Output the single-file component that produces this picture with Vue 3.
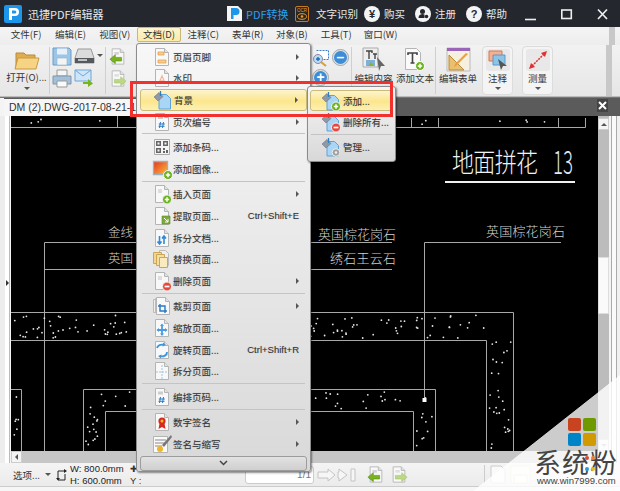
<template>
  <div class="app">
    <svg class="defs" width="0" height="0">
      <defs>
        <linearGradient id="g-red" x1="0" y1="0" x2="1" y2="1"><stop offset="0" stop-color="#e8341c" /><stop offset="1" stop-color="#f8c040" /></linearGradient>
        <g id="pg"><path d="M3.5 1.5h9l4 4v13h-13z" fill="#f8f8f8" stroke="#b4b4b4" /><path d="M12.5 1.5v4h4" fill="#e2e2e2" stroke="#b4b4b4" /></g>
        <g id="plus"><circle cx="15" cy="15.5" r="4.5" fill="#6cb31c" stroke="#f4f4f4" /><path d="M12.8 15.5h4.4M15 13.3v4.4" stroke="#fff" stroke-width="1.5" /></g>
        <g id="minus"><circle cx="15" cy="15.5" r="4.5" fill="#e5483c" stroke="#f4f4f4" /><path d="M12.6 15.5h4.8" stroke="#fff" stroke-width="1.7" /></g>
        <g id="gear"><circle cx="15" cy="15.5" r="3.8" fill="#a0a0a0" stroke="#eee" /><circle cx="15" cy="15.5" r="1.3" fill="#eee" /></g>
        <g id="bgbase"><path d="M6 4.5h7.5l4 4v10.500H6z" fill="#a9d6f6" stroke="#5fa3d6" /><path d="M1 7l5-4.500 4 4-5 4.500z" fill="#8d98a8" stroke="#667" stroke-width=".5" /><path d="M7.500 1v5" stroke="#2d7fc0" stroke-width="1.300" /></g>
        <g id="hash"><path d="M8.500 10l-1 6M11.500 10l-1 6M6.800 12h6M6.500 14.300h6" stroke="#2a7cc4" stroke-width="1" /></g>

        <symbol id="i-hf" viewBox="0 0 20 20"><use href="#pg" /><path d="M6 5h6v3H6zM6 13h8v3H6z" fill="#f4ce92" stroke="#e49a3c" stroke-width=".7" /></symbol>
        <symbol id="i-wm" viewBox="0 0 20 20"><use href="#pg" /><path d="M7 15l3-7 3 7M8 13h4" fill="none" stroke="#f2b8a0" stroke-width="1.300" /></symbol>
        <symbol id="i-bg" viewBox="0 0 20 20"><use href="#bgbase" /></symbol>
        <symbol id="i-bgadd" viewBox="0 0 20 20"><use href="#bgbase" /><use href="#plus" /></symbol>
        <symbol id="i-bgdel" viewBox="0 0 20 20"><use href="#bgbase" /><use href="#minus" /></symbol>
        <symbol id="i-bgman" viewBox="0 0 20 20"><use href="#bgbase" /><use href="#gear" /></symbol>
        <symbol id="i-num" viewBox="0 0 20 20"><use href="#pg" /><path d="M6 5h5v2H6z" fill="#ccc" /><use href="#hash" /></symbol>
        <symbol id="i-qr" viewBox="0 0 20 20"><path d="M2.500 2.500h15v15h-15z" fill="#f4f4f4" stroke="#aaa" /><path d="M4 4h5v5H4zM11 4h5v5h-5zM4 11h5v5H4zM11 11h2v2h-2zM14 13h2v3h-2zM11 14h2v2h-2z" fill="#666" /><path d="M5.500 5.500h2v2h-2zM12.500 5.500h2v2h-2zM5.500 12.500h2v2h-2z" fill="#f4f4f4" /></symbol>
        <symbol id="i-img" viewBox="0 0 20 20"><path d="M1.500 2.500h14v13h-14z" fill="url(#g-red)" stroke="#9cb0c4" stroke-width="1.300" /><use href="#plus" transform="translate(1 .5)" /></symbol>
        <symbol id="i-ins" viewBox="0 0 20 20"><use href="#pg" /><path d="M6 5h4v4H6z" fill="#ddd" /><use href="#plus" /></symbol>
        <symbol id="i-ext" viewBox="0 0 20 20"><use href="#pg" /><path d="M10 10h8v8h-8z" fill="#7cab3c" stroke="#5d8a25" stroke-width=".6" /><path d="M12 12l4 4M16 13v3h-3" fill="none" stroke="#fff" /></symbol>
        <symbol id="i-spl" viewBox="0 0 20 20"><use href="#pg" /><path d="M7.500 8v8M5.500 13.500l2 2.500 2-2.500M12 16V8M10 10.500l2-2.500 2 2.500" fill="none" stroke="#2e8ad8" stroke-width="1.600" /></symbol>
        <symbol id="i-rep" viewBox="0 0 20 20"><path d="M7.500 1.500h6l3 3v12h-9z" fill="#eee" stroke="#bbb" /><path d="M1.500 3.500h8v11h-8z" fill="#f3d68c" stroke="#c9a658" /><path d="M4.500 5.500h8v11h-8z" fill="#f6dea0" stroke="#c9a658" /><path d="M7.500 8.500h8v10h-8z" fill="#faeac0" stroke="#c9a658" /></symbol>
        <symbol id="i-del" viewBox="0 0 20 20"><use href="#pg" /><path d="M6 5h4v4H6z" fill="#ddd" /><use href="#minus" /></symbol>
        <symbol id="i-crop" viewBox="0 0 20 20"><path d="M1.500 3.500h8v13h-8z" fill="#eee" stroke="#bbb" /><path d="M3.500 2.500h8v14h-8z" fill="#f4f4f4" stroke="#bbb" /><use href="#pg" transform="translate(1 0)" /><path d="M8 8v7h7M6 10h7v7" fill="none" stroke="#2878c4" stroke-width="1.400" /></symbol>
        <symbol id="i-siz" viewBox="0 0 20 20"><use href="#pg" /><path d="M10 7v10M5.500 12h9" stroke="#4a9ce0" stroke-width="1.800" /><path d="M10 5.500l-2 2.500h4zM10 18l-2-2.500h4zM4.500 12l2.500-2v4zM15.500 12l-2.500-2v4z" fill="#4a9ce0" /></symbol>
        <symbol id="i-rot" viewBox="0 0 20 20"><use href="#pg" /><path d="M5 8a5 4 0 0 1 7-3M15 12a5 4 0 0 1-7 4" fill="none" stroke="#3c96dc" stroke-width="1.800" /><path d="M11 2.500l3 2.500-3.500 1.500zM9 18.500l-3-2.500 3.500-1.500z" fill="#3c96dc" /></symbol>
        <symbol id="i-pgs" viewBox="0 0 20 20"><use href="#pg" /><path d="M10 4v14M4 11h12" stroke="#9cc4e4" stroke-dasharray="2 1" /></symbol>
        <symbol id="i-arr" viewBox="0 0 20 20"><use href="#pg" /><path d="M6 4.500h5v3H6z" fill="#ccc" /><use href="#hash" /></symbol>
        <symbol id="i-sig" viewBox="0 0 20 20"><use href="#pg" /><circle cx="10" cy="9" r="3.600" fill="#d62a20" /><circle cx="10" cy="9" r="1.500" fill="#f4c020" /><path d="M7.500 11.500l-1 5.500 3.500-2 3.500 2-1-5.500z" fill="#d62a20" /></symbol>
        <symbol id="i-ini" viewBox="0 0 20 20"><path d="M1.500 2.500h14v16h-14z" fill="#fafafa" stroke="#b4b4b4" /><path d="M3 6h11M3 9h11M3 12h7" stroke="#888" /><path d="M19 1l-9 10 2 2L20 3z" fill="#777" /><circle cx="8" cy="15" r="3" fill="#f0b428" /></symbol>

        <symbol id="i-docl" viewBox="0 0 20 20"><use href="#pg" /><path d="M6 5h5v3H6z" fill="#d4d4d4" /><path d="M1 13l6-5v3h7v4H7v3z" fill="#78b41e" stroke="#4f8410" stroke-width=".6" /></symbol>
        <symbol id="i-docr" viewBox="0 0 20 20"><use href="#pg" /><path d="M6 5h5v3H6z" fill="#e0e0e0" /><path d="M19 13l-6-5v3H6v4h7v3z" fill="#bcd884" stroke="#a3c06c" stroke-width=".6" /></symbol>
      </defs>
    </svg>

    <header class="titlebar">
      <svg class="logo" viewBox="0 0 18 18"><rect width="18" height="18" rx="2" fill="#1c96ea" /><path d="M5 15V3h6a4 4 0 0 1 0 8H8v4z" fill="#fff" /><path d="M8 5.500h2.800a1.500 1.500 0 0 1 0 3H8z" fill="#1c96ea" /></svg>
      <span class="app-name">迅捷PDF编辑器</span>
      <svg class="pdf-ico" viewBox="0 0 17 17"><path d="M1 1h11l4 4v11H1z" fill="#f4f4f4" /><path d="M5 14V3h5a3.500 3.500 0 0 1 0 7H7.500v4z" fill="#1c96ea" /></svg>
      <span class="pdf-conv">PDF转换</span>
      <svg class="ocr-ico" viewBox="0 0 14 16">
        <rect x=".5" y=".5" width="13" height="15" rx="1.500" fill="#2a2622" stroke="#c87a1e" />
        <text x="7" y="6" text-anchor="middle" font-size="4.500" fill="#e89a2c" font-family="Liberation Sans, sans-serif">OCR</text>
        <ellipse cx="7" cy="10.500" rx="4.500" ry="2.800" fill="none" stroke="#e89a2c" />
        <circle cx="7" cy="10.500" r="1.300" fill="#e89a2c" />
      </svg>
      <span class="tb-link first">文字识别</span>
      <span class="round-ico">¥</span>
      <span class="tb-link">购买</span>
      <span class="round-ico">
        <svg viewBox="0 0 15 15" width="15" height="15"><circle cx="6.500" cy="5.500" r="2.500" fill="#24282e" /><path d="M2.500 12c0-3 2-4 4-4 1 0 1.500.2 2 .6v3.400z" fill="#24282e" /><circle cx="10.500" cy="10.500" r="1.800" fill="#24282e" /></svg>
      </span>
      <span class="tb-link">注册</span>
      <span class="round-ico">?</span>
      <span class="tb-link">帮助</span>
      <svg class="win-ctrls" viewBox="0 0 84 14" width="84" height="14">
        <path d="M0 12.500h11" stroke="#eee" stroke-width="1.600" />
        <rect x="36.800" y="3" width="9.500" height="8.500" fill="none" stroke="#eee" stroke-width="1.600" />
        <path d="M73 2.500l9 9.500M82 2.500l-9 9.500" stroke="#eee" stroke-width="1.700" />
      </svg>
    </header>

    <nav class="menubar">
      <span v-for="m in menus" :key="m" class="menu-item" :class="{ open: m === '文档(D)' }">{{ m }}</span>
      <i class="menu-grip"></i>
    </nav>

    <div class="toolbar">
      <div class="tool open-tool">
        <svg width="26" height="21" viewBox="0 0 26 21">
          <path d="M2 3h8l2 2h9v13H2z" fill="#e0ac50" stroke="#b98a38" />
          <path d="M1 19l3-11h21l-3 11z" fill="#f6d484" stroke="#c89a44" />
        </svg>
        <span class="lbl">打开(O)...</span>
        <i class="caret"></i>
      </div>
      <i class="tsep"></i>
      <div class="file-tools">
        <svg width="20" height="19" viewBox="0 0 20 19"><path d="M1 1h16l2 2v15H1z" fill="#9cc6e8" stroke="#6d9cc6" /><path d="M5 1.500h10v6H5z" fill="#e8f0f8" /><path d="M5 11h10v7H5z" fill="#f4f4f4" stroke="#8fb2d0" stroke-width=".6" /></svg>
        <div class="scan">
          <svg width="21" height="18" viewBox="0 0 21 18"><path d="M4 2h13l3 9v5H1v-5z" fill="#dcdcdc" stroke="#999" /><path d="M1 11h19v5H1z" fill="#55585c" /><path d="M4 13h9" stroke="#eee" stroke-width="1.400" /></svg>
          <i class="caret small"></i>
        </div>
        <svg width="20" height="19" viewBox="0 0 20 19"><path d="M5 1h10v6H5z" fill="#f6f6f6" stroke="#999" /><path d="M1 7h18v8H1z" fill="#a4c0d8" stroke="#7d97ad" /><path d="M5 12h10v6H5z" fill="#fafafa" stroke="#999" /></svg>
        <svg width="20" height="18" viewBox="0 0 20 18"><path d="M1 1h16v11H1z" fill="#cfe6fa" stroke="#6ea6d4" /><path d="M1 1l8 6 8-6" fill="none" stroke="#6ea6d4" /><path d="M9 13h5v-3l5 4.500-5 3.500v-3H9z" fill="#78b41e" /></svg>
      </div>
      <i class="tsep"></i>
      <div class="doc-tools">
        <svg width="18" height="19"><use href="#i-docl" /></svg>
        <svg width="18" height="19"><use href="#i-docr" /></svg>
      </div>
      <div class="under-menu"></div>
      <div class="zoom-tools">
        <div class="zoom-row">
          <svg width="19" height="18" viewBox="0 0 19 18"><path d="M4.500 1.500h12v9h-6" fill="#fff" stroke="#3a80c8" stroke-dasharray="2 1" /><circle cx="6" cy="10" r="4.500" fill="#b8dcf6" stroke="#88a" /><path d="M4 10h4M6 8v4" stroke="#2068b0" stroke-width="1.300" /><path d="M9 13l5 4" stroke="#d8a040" stroke-width="2.200" /></svg>
          <span class="circ">–</span>
        </div>
        <span class="circ second">+</span>
      </div>
      <i class="tsep"></i>
      <div class="tool edit-tool">
        <svg width="24" height="25" viewBox="0 0 24 25"><path d="M1 1h15v19H1z" fill="#eee" stroke="#aaa" /><path d="M4 4h6v2M7 4v8M11 7h4M13 7v5" fill="none" stroke="#444" stroke-width="1.400" /><path d="M4 13h9v6H4z" fill="#7cb0d8" /><path d="M6 19l3-4 3 4z" fill="#8cb040" /><path d="M15 10l8 9-4 0-2 5z" fill="#666" /></svg>
        <span class="lbl">编辑内容</span>
      </div>
      <div class="tool edit-tool w40">
        <svg width="22" height="25" viewBox="0 0 22 25"><path d="M1.500 1.500h11l4 4v17h-15z" fill="#fafafa" stroke="#b4b4b4" /><path d="M4 8V6h9v2M8.500 6v10M6.500 16h4" fill="none" stroke="#444" stroke-width="1.600" /><circle cx="16" cy="19" r="4.500" fill="#6cb31c" stroke="#fff" /><path d="M13.800 19h4.400M16 16.800v4.400" stroke="#fff" stroke-width="1.500" /></svg>
        <span class="lbl">添加文本</span>
      </div>
      <i class="tsep"></i>
      <div class="tool form-tool">
        <svg width="25" height="25" viewBox="0 0 25 25"><path d="M1 1h23v23H1z" fill="#f6f0e0" stroke="#bbb" /><path d="M1 1h23v3H1z" fill="#9a64b8" /><path d="M3 8l0 15 15 0z" fill="#e8c070" stroke="#b88a3c" /><path d="M22 7L10 19l-2 1 1-3L20 6z" fill="#e8a040" /></svg>
        <span class="lbl">编辑表单</span>
      </div>
      <div class="drop-btn">
        <span class="btn-ico">
          <svg width="20" height="20" viewBox="0 0 20 20"><path d="M1 1h13v10H1z" fill="#f4b090" stroke="#d87850" /><path d="M5 5h12v10H5z" fill="#8cc4e8" stroke="#5a98c8" /><path d="M10 9l9 7-4 0-2 4z" fill="#555" /></svg>
        </span>
        <span class="lbl">注释</span>
        <i class="caret"></i>
      </div>
      <div class="drop-btn">
        <span class="btn-ico">
          <svg width="20" height="20" viewBox="0 0 20 20"><path d="M4 16L16 4" stroke="#e03030" stroke-width="1.500" stroke-dasharray="2 1" /><path d="M1 19l2-6 4 4zM19 1l-2 6-4-4z" fill="#e03030" /></svg>
        </span>
        <span class="lbl">测量</span>
        <i class="caret"></i>
      </div>
      <div class="toolbar-grip"></div>
    </div>

    <div class="tabbar">
      <div class="tab">DM (2).DWG-2017-08-21-15</div>
      <span class="tab-close">
        <svg width="9" height="9" viewBox="0 0 9 9"><path d="M1 1l7 7M8 1L1 8" stroke="#fff" stroke-width="2" /></svg>
      </span>
    </div>

    <div class="main">
      <div class="left-strip"><i class="tri-r"></i></div>
      <div class="canvas-col">
        <svg class="drawing" width="587" height="335" viewBox="11 116 587 335">
          <rect x="11" y="116" width="587" height="335" fill="#000" />
          <g fill="none" stroke="#a8a8a8" stroke-width="1">
            <path d="M11 127.500H585.500V118M117.500 116V127M411.500 118V127M438.500 118V127M558.500 118V127" />
            <path d="M44.500 242.500H392M44.500 269.500H392M44.500 242.500V451" />
            <path d="M424.500 242.500H561M424.500 242.500V400" />
            <path d="M11 312.500H513.500V451M11 340.500H486.500V451" />
            <path d="M11 389.500H21.500V451M83.500 451V389.500H435.500V451M105.500 451V411.500H413.500V451" />
          </g>
          <rect x="422.500" y="398" width="4" height="4" fill="#fff" />
          <circle v-for="(d, i) in dots" :key="i" :cx="d[0]" :cy="d[1]" r=".9" fill="#e6e6e6" />
          <g class="cad" fill="#d0d0d0">
            <text x="108" y="237" font-size="12" textLength="25" lengthAdjust="spacingAndGlyphs">金线</text>
            <text x="108" y="263" font-size="12" textLength="25" lengthAdjust="spacingAndGlyphs">英国</text>
            <text x="318" y="239" font-size="13" textLength="78" lengthAdjust="spacing">英国棕花岗石</text>
            <text x="330" y="263" font-size="13" textLength="66" lengthAdjust="spacing">绣石王云石</text>
            <text x="486" y="236" font-size="13" textLength="79" lengthAdjust="spacing">英国棕花岗石</text>
            <text x="452" y="172" font-size="22" fill="#f2f2f2" textLength="86" lengthAdjust="spacing" transform="translate(0 -34.400) scale(1 1.200)">地面拼花</text>
            <text x="553" y="174" font-size="33" fill="#dce8f4" textLength="20" lengthAdjust="spacingAndGlyphs">13</text>
          </g>
          <path d="M445 182H575" stroke="#f0f0f0" stroke-width="2" />
        </svg>
        <div class="hscroll"><span class="sb-btn"><i class="tri-l"></i></span></div>
      </div>
      <div class="vscroll">
        <span class="sb-btn up"><i class="tri-u"></i></span>
        <span class="thumb"></span>
        <span class="sb-btn down"><i class="tri-d"></i></span>
      </div>
      <div class="right-strip"></div>
    </div>

    <footer class="statusbar">
      <span class="opt">选项...</span>
      <i class="caret small"></i>
      <svg class="size-ico" width="11" height="13" viewBox="0 0 11 13"><path d="M2 12V3h7M2 12h7V6" fill="none" stroke="#222" /><path d="M8 1l3 2-3 2zM0 10l2 2.500L4 10z" fill="#222" /></svg>
      <div class="dims"><span>W: 800.0mm</span><span>H: 600.0mm</span></div>
      <div class="coords"><span class="cross">✚</span><span>Y :</span></div>
      <div class="page-input">1/1</div>
      <svg class="nav" width="41" height="16" viewBox="0 0 41 16"><path d="M1 8l7-6v3h10v6H8v3z" transform="matrix(-1 0 0 1 19 0)" fill="#f6f6f6" stroke="#c4c4c4" /><path d="M22 2l8 6-8 6v-3h-1V5h1zM34 2h4v12h-4z" fill="#f6f6f6" stroke="#c4c4c4" /></svg>
      <svg width="18" height="19" class="st-doc"><use href="#i-docl" /></svg>
      <svg width="18" height="19" class="st-doc"><use href="#i-docr" /></svg>
      <div class="st-right">
        <svg width="16" height="19" viewBox="0 0 16 19"><path d="M1 1h10l4 4v13H1z" fill="#fafafa" stroke="#ccc" /></svg>
        <svg width="21" height="19" viewBox="0 0 21 19"><path d="M1 1h19v17H1z" fill="#fdfaf0" stroke="#ecdcb8" /><path d="M4 10h13v8H4z" fill="#fff" stroke="#ecdcb8" /></svg>
      </div>
    </footer>

    <div class="doc-menu">
      <template v-for="(it, i) in docItems" :key="i">
        <div v-if="it.sep" class="sep"></div>
        <div v-else class="row" :class="{ active: it.active }">
          <svg class="mi"><use :href="'#i-' + it.icon" /></svg>
          <span class="row-label">{{ it.label }}</span>
          <span v-if="it.shortcut" class="shortcut">{{ it.shortcut }}</span>
          <i v-if="it.arrow" class="arrow"></i>
        </div>
      </template>
      <div class="more">
        <svg width="9" height="6" viewBox="0 0 9 6"><path d="M1 1l3.500 3.500L8 1" fill="none" stroke="#444" stroke-width="1.500" /></svg>
      </div>
    </div>

    <div class="sub-menu">
      <div class="row active"><svg class="mi"><use href="#i-bgadd" /></svg><span class="row-label">添加...</span></div>
      <div class="row"><svg class="mi"><use href="#i-bgdel" /></svg><span class="row-label">删除所有...</span></div>
      <div class="sep"></div>
      <div class="row"><svg class="mi"><use href="#i-bgman" /></svg><span class="row-label">管理...</span></div>
    </div>

    <div class="red-box"></div>

    <div class="watermark">
      <div class="ms-logo"><i class="a"></i><i class="b"></i><i class="c"></i><i class="d"></i></div>
      <div class="wm-name">系统粉</div>
      <i class="wm-dot red"></i>
      <i class="wm-dot org"></i>
      <i class="wm-dot blu"></i>
      <i class="wm-dot yel"></i>
      <div class="wm-url">www.win7999.com</div>
    </div>
  </div>
</template>

<script setup>
const menus = ['文件(F)', '编辑(E)', '视图(V)', '文档(D)', '注释(C)', '表单(R)', '对象(B)', '工具(T)', '窗口(W)']

const docItems = [
  { icon: 'hf', label: '页眉页脚', arrow: true },
  { icon: 'wm', label: '水印', arrow: true },
  { icon: 'bg', label: '背景', arrow: true, active: true },
  { icon: 'num', label: '页次编号', arrow: true },
  { sep: true },
  { icon: 'qr', label: '添加条码...' },
  { icon: 'img', label: '添加图像...' },
  { sep: true },
  { icon: 'ins', label: '插入页面', arrow: true },
  { icon: 'ext', label: '提取页面...', shortcut: 'Ctrl+Shift+E' },
  { icon: 'spl', label: '拆分文档...' },
  { icon: 'rep', label: '替换页面...' },
  { icon: 'del', label: '删除页面', arrow: true },
  { sep: true },
  { icon: 'crop', label: '裁剪页面', arrow: true },
  { icon: 'siz', label: '缩放页面...' },
  { icon: 'rot', label: '旋转页面...', shortcut: 'Ctrl+Shift+R' },
  { icon: 'pgs', label: '拆分页面...' },
  { sep: true },
  { icon: 'arr', label: '编排页码...' },
  { sep: true },
  { icon: 'sig', label: '数字签名', arrow: true },
  { icon: 'ini', label: '签名与缩写', arrow: true }
]

// speckles of the stone band in the drawing, seeded so every run is the same
let seed = 48271
const rnd = () => {
  seed = (seed * 16807) % 2147483647
  return seed / 2147483647
}
const scatter = (x, y, w, h, n, out) => {
  for (let i = 0; i < n; i++) {
    out.push([+(x + 2 + rnd() * (w - 4)).toFixed(1), +(y + 2 + rnd() * (h - 4)).toFixed(1)])
  }
  return out
}
const dots = []
scatter(11, 313, 475, 27, 150, dots)
scatter(487, 340, 26, 111, 28, dots)
scatter(84, 390, 351, 21, 50, dots)
scatter(84, 411, 21, 40, 14, dots)
scatter(414, 411, 21, 40, 9, dots)
scatter(11, 390, 10, 60, 6, dots)
scatter(12, 117, 573, 10, 18, dots)
</script>

<style>
html,
body {
  margin: 0;
  background: #fff;
}
</style>

<style scoped>
.app {
  position: relative;
  width: 620px;
  height: 491px;
  overflow: hidden;
  display: flex;
  flex-direction: column;
  background: #f6f6f6;
  font-family: "Noto Sans CJK SC", "Liberation Sans", sans-serif;
  font-size: 9.5px;
  color: #333;
}

.defs {
  position: absolute;
}

.titlebar {
  height: 27px;
  flex: none;
  display: flex;
  align-items: center;
  padding-left: 4px;
  background: #24282e;
  color: #e8e8e8;
}

.logo {
  width: 18px;
  height: 18px;
}

.app-name {
  margin-left: 6px;
  width: 198px;
  font-size: 11px;
}

.pdf-ico {
  width: 17px;
  height: 17px;
}

.pdf-conv {
  margin-left: 3px;
  width: 49px;
  font-size: 11px;
  color: #2a9ff0;
}

.ocr-ico {
  width: 14px;
  height: 16px;
}

.tb-link {
  font-size: 10.500px;
  margin-left: 4px;
  margin-right: 9px;
  width: 22px;
  white-space: nowrap;
}

.tb-link.first {
  margin-left: 7px;
  margin-right: 6px;
  width: 42px;
}

.round-ico {
  width: 16px;
  height: 16px;
  border-radius: 50%;
  background: #f4f4f4;
  color: #24282e;
  display: flex;
  align-items: center;
  justify-content: center;
  font: bold 11px "Liberation Sans", sans-serif;
}

.win-ctrls {
  margin-left: 8px;
}

.menubar {
  height: 18px;
  flex: none;
  display: flex;
  padding-left: 4px;
  background: linear-gradient(#f4f4f4, #ededed);
}

.menu-item {
  width: 44.300px;
  height: 15px;
  line-height: 15px;
  text-align: center;
  box-sizing: border-box;
  white-space: nowrap;
}

.menu-item.open {
  background: linear-gradient(#fdf6d4, #fbe9a4);
  outline: 1px solid #c8b878;
  outline-offset: -1px;
  border-radius: 2px;
}

.menu-grip {
  margin-left: auto;
  margin-right: 5px;
  width: 6px;
  background: #c8c8c8;
}

.toolbar {
  height: 52px;
  flex: none;
  display: flex;
  padding-left: 4px;
  background: linear-gradient(#f2f2f2, #e6e6e6);
  border-bottom: 1px solid #bbb;
  box-sizing: border-box;
}

.tool {
  display: flex;
  flex-direction: column;
  align-items: center;
  white-space: nowrap;
}

.lbl {
  line-height: 12px;
  white-space: nowrap;
}

.open-tool {
  width: 45px;
  padding-top: 5px;
}

.caret {
  display: block;
  width: 0;
  height: 0;
  margin-top: 4px;
  border: 3px solid transparent;
  border-top: 3px solid #555;
  border-bottom: 0;
}

.caret.small {
  margin: 0;
}

.tsep {
  width: 1px;
  margin: 2px 0;
  background: #cfcfcf;
  flex: none;
}

.file-tools {
  width: 55px;
  padding: 2px 0 0 2px;
  box-sizing: border-box;
  display: grid;
  grid-template-columns: 22px 30px;
  grid-template-rows: 22px 20px;
}

.scan {
  display: flex;
  gap: 2px;
}

.scan .caret {
  margin-top: 7px;
}

.doc-tools {
  width: 29px;
  padding: 2px 0 0 3px;
  box-sizing: border-box;
  display: flex;
  flex-direction: column;
  gap: 3px;
}

.under-menu {
  width: 176px;
  flex: none;
}

.zoom-tools {
  width: 41px;
  margin-left: -1px;
  padding: 4px 0 0 2px;
  box-sizing: border-box;
}

.zoom-row {
  display: flex;
  gap: 1px;
  align-items: flex-start;
}

.circ {
  display: block;
  width: 17px;
  height: 17px;
  box-sizing: border-box;
  border-radius: 50%;
  background: #3c8cd8;
  border: 2px solid #d8e4ec;
  outline: 1px solid #a8a8a8;
  outline-offset: -1px;
  color: #fff;
  text-align: center;
  font: bold 14px/12px "Liberation Sans", sans-serif;
}

.circ.second {
  margin-top: 2px;
}

.edit-tool {
  width: 43px;
  padding-top: 2px;
}

.edit-tool.w40 {
  width: 40px;
}

.form-tool {
  width: 44px;
  padding-top: 2px;
}

.drop-btn {
  width: 31px;
  height: 49px;
  margin: 1px 0 0 2px;
  margin-right: 7px;
  box-sizing: border-box;
  padding-top: 2px;
  display: flex;
  flex-direction: column;
  align-items: center;
  background: #f4f4f4;
  border: 1px solid #dcdcdc;
  border-radius: 4px;
}

.btn-ico {
  width: 24px;
  height: 22px;
  display: flex;
  align-items: center;
  justify-content: center;
  background: #e8e8e8;
  border-radius: 3px;
}

.drop-btn .lbl {
  margin-top: 1px;
}

.drop-btn .caret {
  margin-top: 3px;
}

.toolbar-grip {
  margin-left: 46px;
  width: 6px;
  background: #c8c8c8;
}

.tabbar {
  height: 19px;
  flex: none;
  display: flex;
  padding-left: 4px;
  padding-top: 2px;
  box-sizing: border-box;
  background: linear-gradient(90deg, #f4f4f4 0, #f4f4f4 4px, #5b5b5b 4px);
  box-shadow: inset 0 1px 0 #777;
}

.tab {
  width: 136px;
  padding-left: 5px;
  box-sizing: border-box;
  background: #f6f6f6;
  font: 10.500px/17px "Liberation Sans", sans-serif;
  color: #333;
  white-space: nowrap;
}

.tab-close {
  margin-left: auto;
  margin-right: 12px;
  width: 11px;
  height: 13px;
  display: flex;
  align-items: center;
  justify-content: center;
  background: #444;
}

.main {
  height: 347px;
  flex: none;
  display: flex;
}

.left-strip {
  width: 11px;
  flex: none;
  display: flex;
  align-items: center;
  padding-top: 10px;
  padding-left: 5px;
  box-sizing: border-box;
  background: linear-gradient(90deg, #ededed 5px, #fff 5px, #fff 9px, #bbb 9px, #bbb 10px, #f4f4f4 10px);
}

.tri-r {
  width: 0;
  height: 0;
  margin-left: 1px;
  margin-bottom: 24px;
  border: 3px solid transparent;
  border-left: 3px solid #333;
  border-right: 0;
}

.canvas-col {
  width: 587px;
  flex: none;
  display: flex;
  flex-direction: column;
}

.drawing {
  display: block;
}

.cad text {
  font-family: "Noto Sans CJK SC", sans-serif;
  font-weight: 300;
}

.hscroll {
  height: 12px;
  background: #c6c6c6;
}

.sb-btn {
  display: flex;
  align-items: center;
  justify-content: center;
  width: 11px;
  height: 12px;
  background: #f4f4f4;
  border: 1px solid #ccc;
  box-sizing: border-box;
}

.tri-l {
  width: 0;
  height: 0;
  border: 3px solid transparent;
  border-right: 3px solid #555;
  border-left: 0;
}

.vscroll {
  width: 11px;
  flex: none;
  margin-bottom: 12px;
  display: flex;
  flex-direction: column;
  background: #bcbcbc;
}

.vscroll .up {
  margin-top: 2px;
}

.tri-u {
  width: 0;
  height: 0;
  border: 3px solid transparent;
  border-bottom: 3px solid #555;
  border-top: 0;
}

.tri-d {
  width: 0;
  height: 0;
  border: 3px solid transparent;
  border-top: 3px solid #aaa;
  border-bottom: 0;
}

.thumb {
  height: 57px;
  margin-top: 127px;
  background: #fafafa;
  border: 1px solid #ddd;
  box-sizing: border-box;
}

.vscroll .down {
  margin-top: auto;
}

.right-strip {
  width: 11px;
  flex: none;
  background: linear-gradient(90deg, #f4f4f4 2px, #aaa 2px, #aaa 3px, #fafafa 3px, #fafafa 7px, #aaa 7px, #aaa 8px, #f0f0f0 8px);
}

.statusbar {
  height: 24px;
  flex: none;
  display: flex;
  align-items: center;
  padding-left: 13px;
  background: linear-gradient(#f4f4f4, #ebebeb);
  border-bottom: 1px solid #ccc;
  box-sizing: border-box;
}

.opt {
  font-size: 9.500px;
  width: 32px;
}

.size-ico {
  margin-left: 5px;
}

.dims {
  margin-left: 3px;
  width: 60px;
  display: flex;
  flex-direction: column;
  font: 9.500px/12px "Liberation Sans", sans-serif;
  color: #222;
}

.coords {
  width: 115px;
  display: flex;
  flex-direction: column;
  align-items: flex-start;
  font: 9.500px/11px "Liberation Sans", sans-serif;
}

.cross {
  font-size: 9px;
}

.page-input {
  width: 69px;
  height: 18px;
  box-sizing: border-box;
  border: 1px solid #ccc;
  border-radius: 3px;
  background: #fff;
  text-align: right;
  padding-right: 2px;
  font: 10px/16px "Liberation Sans", sans-serif;
  color: #777;
}

.nav {
  margin-left: 3px;
}

.st-doc {
  margin-left: 5px;
}

.nav + .st-doc {
  margin-left: 9px;
}

.st-right {
  margin-left: 76px;
  padding-left: 5px;
  display: flex;
  gap: 4px;
  border-left: 1px solid #ccc;
}

.doc-menu {
  position: absolute;
  left: 136px;
  top: 43px;
  width: 175px;
  height: 429px;
  box-sizing: border-box;
  padding-top: 2px;
  background: linear-gradient(#f7f7f7, #d9d9d9);
  border: 1px solid #8c8c8c;
  border-radius: 3px;
  box-shadow: 1px 1px 2px rgba(0, 0, 0, 0.45);
}

.row {
  height: 21.600px;
  display: flex;
  align-items: center;
  padding-left: 15px;
  padding-right: 11px;
  box-sizing: border-box;
  color: #333;
  text-shadow: 0 0 1px rgba(0, 0, 0, 0.25);
}

.row.active {
  margin: 0 3px;
  padding-left: 12px;
  padding-right: 8px;
  background: linear-gradient(#fdf4ce, #fce68c 55%, #fdf0b4);
  border: 1px solid #cabb7c;
  border-radius: 3px;
}

.mi {
  width: 20px;
  height: 20px;
  flex: none;
  margin-right: 1px;
}

.row-label {
  white-space: nowrap;
}

.shortcut {
  margin-left: auto;
  font-family: "Liberation Sans", sans-serif;
  font-size: 9.500px;
}

.arrow {
  margin-left: auto;
  width: 0;
  height: 0;
  border: 3px solid transparent;
  border-left: 3.500px solid #555;
  border-right: 0;
}

.sep {
  height: 4px;
  margin: 0 5px;
  background: linear-gradient(transparent 1.500px, #c4c4c4 1.500px, #c4c4c4 2.500px, transparent 2.500px);
}

.more {
  height: 15px;
  margin: 1px 3px 0;
  display: flex;
  align-items: center;
  justify-content: center;
  background: linear-gradient(#e2e2e2, #cfcfcf);
  border: 1px solid #9c9c9c;
  border-radius: 3px;
  box-sizing: border-box;
}

.sub-menu {
  position: absolute;
  left: 307px;
  top: 86px;
  width: 89px;
  height: 76px;
  box-sizing: border-box;
  padding-top: 3px;
  background: linear-gradient(#f6f6f6, #d8d8d8);
  border: 1px solid #8c8c8c;
  border-radius: 3px;
  box-shadow: 1px 1px 2px rgba(0, 0, 0, 0.45);
}

.sub-menu .row {
  padding-left: 13px;
  padding-right: 0;
}

.sub-menu .row.active {
  margin: 0 2px;
  padding-left: 10px;
  height: 21px;
}

.sub-menu .mi {
  margin-right: 2px;
}

.sub-menu .sep {
  margin: 0 3px;
}

.red-box {
  position: absolute;
  left: 130px;
  top: 81px;
  width: 263px;
  height: 36px;
  box-sizing: border-box;
  border: 3px solid #f2302e;
  pointer-events: none;
}

.watermark {
  position: absolute;
  right: 0;
  bottom: 0;
  z-index: 5;
  width: 147px;
  height: 116px;
  background: linear-gradient(to bottom right, rgba(255, 255, 255, 0) 49.800%, rgba(255, 255, 255, 0.8) 50.200%);
}

.ms-logo {
  position: absolute;
  left: 95px;
  top: 43px;
  width: 28px;
  height: 28px;
  display: grid;
  grid-template-columns: 1fr 1fr;
  gap: 2px;
}

.ms-logo i {
  border-radius: 2px;
}

.ms-logo .a {
  background: #c8431f;
}

.ms-logo .b {
  background: #6e9a00;
}

.ms-logo .c {
  background: #0084c8;
}

.ms-logo .d {
  background: #d09a00;
}

.wm-name {
  position: absolute;
  left: 61px;
  top: 76px;
  font-size: 27px;
  line-height: 22px;
  letter-spacing: 1px;
  color: #444;
  white-space: nowrap;
}

.wm-dot {
  position: absolute;
  width: 4px;
  height: 4px;
  border-radius: 50%;
}

.wm-dot.red {
  left: 112px;
  top: 81px;
  background: #e04a30;
}

.wm-dot.org {
  left: 118px;
  top: 81px;
  background: #f08030;
}

.wm-dot.blu {
  left: 112px;
  top: 92px;
  background: #2a9ad8;
}

.wm-dot.yel {
  left: 118px;
  top: 92px;
  background: #e8b820;
}

.wm-url {
  position: absolute;
  left: 64px;
  top: 100px;
  font: 9.500px/12px "Liberation Sans", sans-serif;
  color: #444;
  white-space: nowrap;
}
</style>
